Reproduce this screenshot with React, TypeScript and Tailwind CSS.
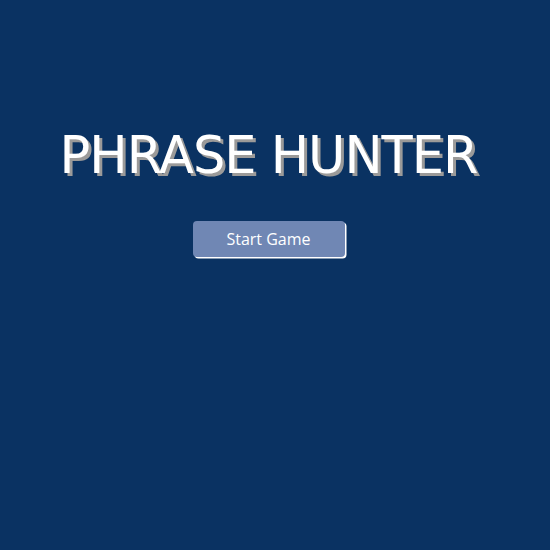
export default function App() {
  return (
    <div className="min-h-[550px] w-full bg-[#0a3262] flex">
      <div className="w-[537px] flex flex-col items-center pt-[121px]">
        <h2
          className="text-white text-[51px] leading-[70px] font-normal m-0 tracking-[-1px]"
          style={{ fontFamily: '"DejaVu Sans", sans-serif', textShadow: "3px 3px 0 #9b9a99" }}
        >
          PHRASE HUNTER
        </h2>
        <button
          className="mt-[30px] w-[152px] h-[36px] rounded-[4px] bg-[#7087b4] text-white text-[16px] shadow-[1.5px_1.5px_0_#ffffff]"
          style={{ fontFamily: '"Open Sans", sans-serif' }}
        >
          Start Game
        </button>
      </div>
    </div>
  );
}
